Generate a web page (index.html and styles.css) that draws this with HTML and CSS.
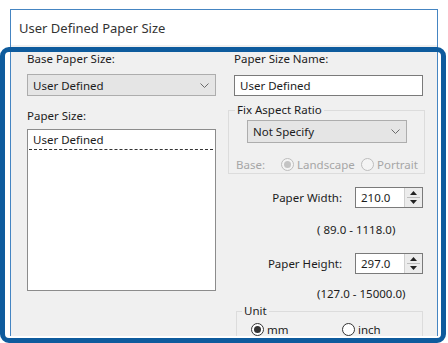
FILE: index.html
```html
<!DOCTYPE html>
<html lang="en">
<head>
    <meta charset="UTF-8">
    <title>User Defined Paper Size</title>
    <link rel="stylesheet" href="styles.css">
</head>
<body>
    <div class="page">
        <div class="dialog">
            <div class="dialog-title">User Defined Paper Size</div>
            <div class="dialog-body">
                <div class="col">
                    <div class="label">Base Paper Size:</div>
                    <div class="combo combo-base">
                        <span>User Defined</span>
                        <svg width="9" height="5" viewBox="0 0 9 5"><path d="M0.5 0.5 L4.5 4.5 L8.5 0.5" fill="none" stroke="#6a6a6a"/></svg>
                    </div>
                    <div class="label label-size">Paper Size:</div>
                    <div class="listbox">
                        <div class="list-item">User Defined</div>
                    </div>
                </div>

                <div class="col">
                    <div class="label">Paper Size Name:</div>
                    <div class="textbox">User Defined</div>

                    <fieldset class="group group-ratio">
                        <legend>Fix Aspect Ratio</legend>
                        <div class="combo combo-ratio">
                            <span>Not Specify</span>
                            <svg width="9" height="5" viewBox="0 0 9 5"><path d="M0.5 0.5 L4.5 4.5 L8.5 0.5" fill="none" stroke="#6a6a6a"/></svg>
                        </div>
                        <div class="radio-row disabled">
                            <span class="base-label">Base:</span>
                            <span class="option option-wide"><span class="radio checked"></span>Landscape</span>
                            <span class="option"><span class="radio"></span>Portrait</span>
                        </div>
                    </fieldset>

                    <div class="field-row">
                        <span class="field-label">Paper Width:</span>
                        <div class="spin">
                            <span class="spin-value">210.0</span>
                            <span class="spin-buttons">
                                <svg width="7" height="4" viewBox="0 0 7 4"><path d="M3.5 0 L7 4 L0 4 Z" fill="#222"/></svg>
                                <span class="spin-sep"></span>
                                <svg width="7" height="4" viewBox="0 0 7 4"><path d="M0 0 L7 0 L3.5 4 Z" fill="#222"/></svg>
                            </span>
                        </div>
                    </div>
                    <div class="range">( 89.0 - 1118.0)</div>

                    <div class="field-row field-row-height">
                        <span class="field-label">Paper Height:</span>
                        <div class="spin">
                            <span class="spin-value">297.0</span>
                            <span class="spin-buttons">
                                <svg width="7" height="4" viewBox="0 0 7 4"><path d="M3.5 0 L7 4 L0 4 Z" fill="#222"/></svg>
                                <span class="spin-sep"></span>
                                <svg width="7" height="4" viewBox="0 0 7 4"><path d="M0 0 L7 0 L3.5 4 Z" fill="#222"/></svg>
                            </span>
                        </div>
                    </div>
                    <div class="range range-height">(127.0 - 15000.0)</div>

                    <fieldset class="group group-unit">
                        <legend>Unit</legend>
                        <div class="radio-row">
                            <span class="option option-unit"><span class="radio checked"></span>mm</span>
                            <span class="option"><span class="radio"></span>inch</span>
                        </div>
                    </fieldset>
                </div>
            </div>
        </div>
        <div class="highlight"></div>
    </div>
</body>
</html>
```

FILE: styles.css
```css
body {
    margin: 0;
    background: #fff;
    font-family: "Noto Sans", "Open Sans", sans-serif;
    font-size: 11.5px;
    color: #1c1c1c;
}
.page {
    position: relative;
    width: 448px;
    height: 343px;
    overflow: hidden;
}
.dialog {
    margin: 9px 0 0 10px;
    width: 428px;
    height: 327px;
    box-sizing: border-box;
    border: 1px solid #4585c2;
    border-bottom: 0;
    background: #fff;
}
.dialog-title {
    height: 35px;
    padding-left: 8px;
    display: flex;
    align-items: center;
    font-size: 13px;
    color: #333;
}
.dialog-body {
    height: 291px;
    overflow: hidden;
    background: #f0f0f0;
    padding-left: 16px;
    display: grid;
    grid-template-columns: 189px 189px;
    column-gap: 18px;
    align-items: start;
}
.label {
    line-height: 16px;
    margin-top: 6px;
}
.label-size {
    margin-top: 12px;
}
.combo {
    box-sizing: border-box;
    display: flex;
    align-items: center;
    justify-content: space-between;
    background: #e5e5e5;
    border: 1px solid #adadad;
    padding: 0 6px 0 5px;
}
.combo-base {
    margin-top: 7px;
    height: 22px;
}
.listbox {
    margin-top: 5px;
    height: 162px;
    box-sizing: border-box;
    background: #fff;
    border: 1px solid #8c8c8c;
    padding: 1px 2px 0 1px;
}
.list-item {
    line-height: 18px;
    padding-left: 4px;
    border-bottom: 1px dashed #333;
}
.textbox {
    margin-top: 8px;
    height: 21px;
    box-sizing: border-box;
    background: #fff;
    border: 1px solid #7a7a7a;
    padding-left: 5px;
    line-height: 19px;
}
.group {
    margin: 0;
    padding: 0;
    min-width: 0;
    border: 1px solid #dcdcdc;
}
.group legend {
    padding: 0 2px;
    line-height: 16px;
}
.group-ratio {
    margin: 6px -2px 0 -6px;
    padding: 2px 0 1px 0;
}
.group-ratio legend {
    margin-left: 6px;
}
.combo-ratio {
    margin-left: 18px;
    width: 160px;
    height: 23px;
}
.radio-row {
    display: flex;
    align-items: center;
    height: 16px;
}
.group-ratio .radio-row {
    margin-top: 13px;
    padding-left: 7px;
}
.disabled {
    color: #a6a6a6;
}
.base-label {
    width: 45px;
}
.option {
    display: flex;
    align-items: center;
    gap: 3px;
}
.option-wide {
    width: 80px;
}
.radio {
    width: 13px;
    height: 13px;
    box-sizing: border-box;
    border: 1px solid #333;
    border-radius: 50%;
    background: #fff;
    display: flex;
    align-items: center;
    justify-content: center;
}
.radio.checked::after {
    content: "";
    width: 7px;
    height: 7px;
    border-radius: 50%;
    background: #333;
}
.disabled .radio {
    border-color: #bdbdbd;
    background: #f4f4f4;
}
.disabled .radio.checked::after {
    background: #c4c4c4;
}
.field-row {
    margin-top: 13px;
    display: flex;
    align-items: center;
    justify-content: flex-end;
}
.field-row-height {
    margin-top: 15px;
}
.field-label {
    margin-right: 13px;
}
.spin {
    width: 68px;
    height: 21px;
    box-sizing: border-box;
    border: 1px solid #7a7a7a;
    background: #fff;
    display: flex;
}
.spin-value {
    flex: 1;
    padding-left: 5px;
    line-height: 19px;
}
.spin-buttons {
    width: 17px;
    background: #ececec;
    border-left: 1px solid #d0d0d0;
    display: flex;
    flex-direction: column;
    align-items: center;
    justify-content: center;
    gap: 2px;
}
.spin-sep {
    width: 13px;
    height: 1px;
    background: #bdbdbd;
}
.range {
    margin-top: 14px;
    padding-left: 83px;
    line-height: 16px;
}
.range-height {
    margin-top: 12px;
}
.group-unit {
    margin: 1px 0 0 2px;
    padding: 2px 0 20px 0;
}
.group-unit legend {
    margin-left: 5px;
}
.group-unit .radio-row {
    padding-left: 14px;
}
.option-unit {
    width: 91px;
}
.highlight {
    position: absolute;
    left: 0;
    top: 47px;
    width: 446px;
    height: 296px;
    box-sizing: border-box;
    border: 5px solid #0e5b9d;
    border-radius: 9px;
}
```
